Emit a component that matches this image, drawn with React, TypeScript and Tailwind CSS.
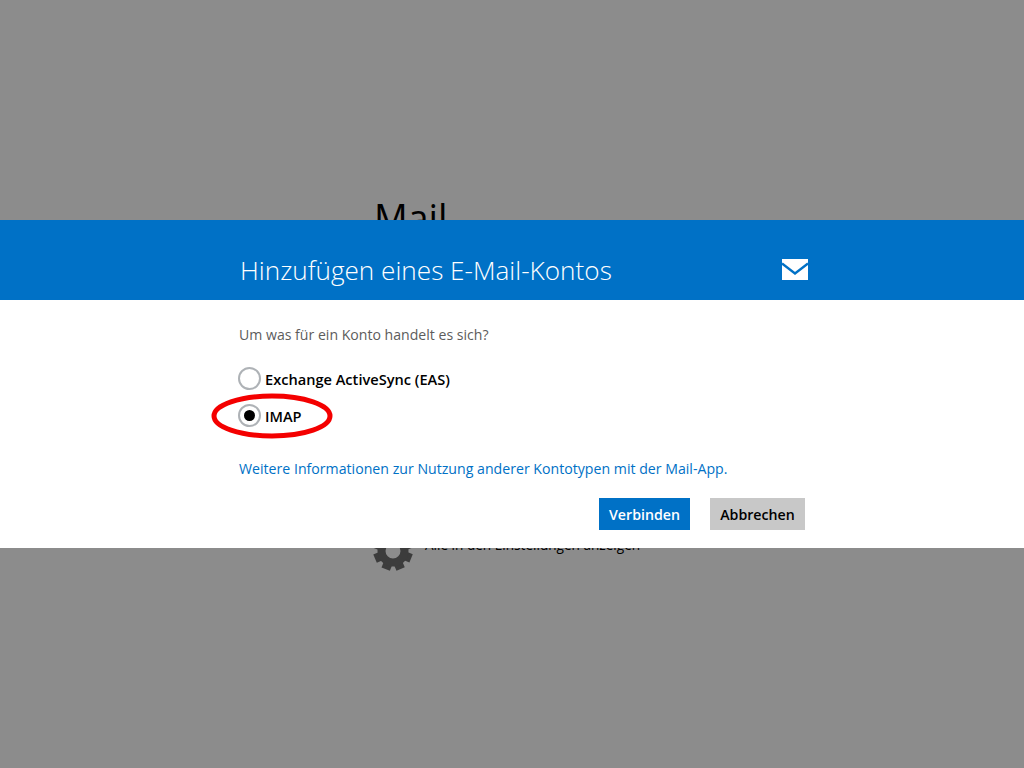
import React from 'react';

const font = { fontFamily: '"Open Sans", "Noto Sans", sans-serif' };

const Radio = ({ checked }: { checked?: boolean }) => (
  <span className="flex h-[23px] w-[23px] shrink-0 items-center justify-center rounded-full border-2 border-[#aeb2b6] bg-white">
    {checked && <span className="h-[11px] w-[11px] rounded-full bg-black" />}
  </span>
);

const Gear = () => (
  <svg width="40" height="40" viewBox="0 0 40 40" className="shrink-0">
    <g fill="#3c3c3c">
      {[0, 45, 90, 135, 180, 225, 270, 315].map(a => (
        <rect key={a} x="15.5" y="0.5" width="9" height="9" transform={`rotate(${a + 22} 20 20)`} />
      ))}
    </g>
    <circle cx="20" cy="20" r="11.5" fill="none" stroke="#3c3c3c" strokeWidth="8" />
  </svg>
);

const App = () => {
  return (
    <div className="relative h-[768px] w-[1024px] overflow-hidden bg-[#8c8c8c]" style={font}>
      {/* page behind the dialog */}
      <div className="pl-[374px] pt-[193px]">
        <h1 className="text-[37.5px] leading-[50px] font-normal text-black">Mail</h1>
        <div className="-ml-px mt-[288px] flex items-start gap-[12px]">
          <Gear />
          <span className="mt-[4px] text-[13.6px] leading-[20px] text-black">Alle in den Einstellungen anzeigen</span>
        </div>
      </div>

      {/* dialog */}
      <div className="absolute inset-x-0 top-[220px]">
        <div className="flex h-[80px] items-end justify-between bg-[#0071c6] pb-[12px] pl-[240px] pr-[216px]">
          <h2 className="text-[26.15px] leading-[36px] font-light text-white">Hinzufügen eines E-Mail-Kontos</h2>
          <svg width="26" height="21" viewBox="0 0 26 21" className="mb-[8px]">
            <rect width="26" height="21" fill="#fff" />
            <path d="M0 4.5 L13 14.5 L26 4.5" fill="none" stroke="#0071c6" strokeWidth="2.4" />
          </svg>
        </div>
        <div className="h-[248px] bg-white pl-[238px] pr-[219px] pt-[24px]">
          <p className="ml-px text-[14.1px] leading-[22px] text-[#5c5c5c]">Um was für ein Konto handelt es sich?</p>
          <div className="mt-[21px] flex flex-col gap-[14px]">
            <label className="flex h-[23px] items-center gap-[4px] text-[14.6px] leading-[23px] font-semibold text-black">
              <Radio />
              <span className="translate-y-px">Exchange ActiveSync (EAS)</span>
            </label>
            <label className="flex h-[23px] items-center gap-[4px] text-[14.6px] leading-[23px] font-semibold text-black">
              <Radio checked />
              <span className="translate-y-px">IMAP</span>
            </label>
          </div>
          <a className="ml-px mt-[31px] block text-[14.15px] leading-[22px] text-[#0071c6]">
            Weitere Informationen zur Nutzung anderer Kontotypen mit der Mail-App.
          </a>
          <div className="mt-[18px] flex justify-end gap-[20px]">
            <button className="h-[32px] w-[91px] bg-[#0071c6] pt-[2px] text-[14.2px] font-semibold text-white">Verbinden</button>
            <button className="h-[32px] w-[95px] bg-[#c8c8c8] pt-[2px] text-[14.2px] font-semibold text-black">Abbrechen</button>
          </div>
        </div>
      </div>

      {/* red marker */}
      <svg width="124" height="48" viewBox="0 0 124 48" className="absolute left-[210px] top-[392px]">
        <ellipse cx="62" cy="24" rx="58" ry="20" fill="none" stroke="#f40000" strokeWidth="5" />
      </svg>
    </div>
  );
};

export default App;
